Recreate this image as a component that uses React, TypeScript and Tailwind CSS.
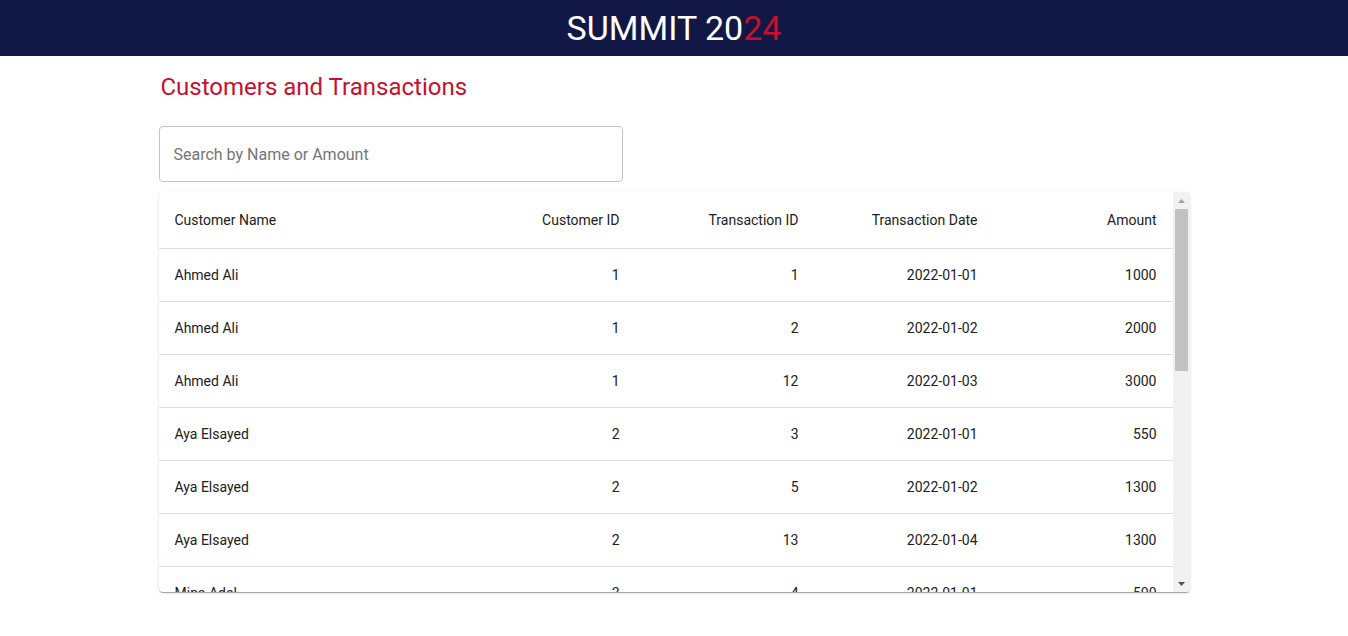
import { useEffect, useRef, useState } from 'react';

const rows = [
  { name: 'Ahmed Ali', cid: 1, tid: 1, date: '2022-01-01', amount: 1000 },
  { name: 'Ahmed Ali', cid: 1, tid: 2, date: '2022-01-02', amount: 2000 },
  { name: 'Ahmed Ali', cid: 1, tid: 12, date: '2022-01-03', amount: 3000 },
  { name: 'Aya Elsayed', cid: 2, tid: 3, date: '2022-01-01', amount: 550 },
  { name: 'Aya Elsayed', cid: 2, tid: 5, date: '2022-01-02', amount: 1300 },
  { name: 'Aya Elsayed', cid: 2, tid: 13, date: '2022-01-04', amount: 1300 },
  { name: 'Mina Adel', cid: 3, tid: 4, date: '2022-01-01', amount: 500 },
  { name: 'Mina Adel', cid: 3, tid: 6, date: '2022-01-02', amount: 750 },
  { name: 'Mina Adel', cid: 3, tid: 14, date: '2022-01-03', amount: 900 },
  { name: 'Sarah Reda', cid: 4, tid: 7, date: '2022-01-01', amount: 2500 },
  { name: 'Sarah Reda', cid: 4, tid: 8, date: '2022-01-02', amount: 875 },
  { name: 'Sarah Reda', cid: 4, tid: 15, date: '2022-01-03', amount: 1100 },
  { name: 'Mohamed Sayed', cid: 5, tid: 9, date: '2022-01-01', amount: 2500 },
  { name: 'Mohamed Sayed', cid: 5, tid: 10, date: '2022-01-02', amount: 875 },
  { name: 'Mohamed Sayed', cid: 5, tid: 11, date: '2022-01-03', amount: 1200 },
  { name: 'Mohamed Sayed', cid: 5, tid: 16, date: '2022-01-04', amount: 1500 },
];

const ARROW = 17;

export default function App() {
  const [search, setSearch] = useState('');
  const scrollRef = useRef<HTMLDivElement>(null);
  const [thumb, setThumb] = useState({ top: 0, height: 160 });

  const filtered = rows.filter(r =>
    !search.trim() ||
    r.name.toLowerCase().includes(search.toLowerCase()) ||
    String(r.amount).includes(search)
  );

  function updateThumb() {
    const el = scrollRef.current;
    if (!el) return;
    const track = el.clientHeight - ARROW * 2;
    const ratio = Math.min(1, el.clientHeight / el.scrollHeight);
    const height = Math.max(20, track * ratio);
    const max = el.scrollHeight - el.clientHeight;
    const top = max > 0 ? (el.scrollTop / max) * (track - height) : 0;
    setThumb({ top, height });
  }

  useEffect(() => {
    updateThumb();
  }, [filtered.length]);

  return (
    <div className="min-h-screen bg-white text-[#212121] font-['Roboto','Liberation_Sans',sans-serif]">
      <header className="h-[56px] bg-[#121846] flex items-center justify-center">
        <h1 className="text-[34px] leading-none text-white">
          SUMMIT 20<span className="text-[#c8102e]">24</span>
        </h1>
      </header>

      <main className="w-[1031px] mx-auto pt-[15px]">
        <h2 className="text-[24px] leading-[32px] text-[#c8102e] pl-[2px]">Customers and Transactions</h2>

        <input
          value={search}
          onChange={e => setSearch(e.target.value)}
          placeholder="Search by Name or Amount"
          className="mt-[23px] block w-[464px] h-[56px] border border-[#c4c4c4] rounded-[4px] px-[14px] text-[16px] text-[#212121] placeholder:text-[#757575] outline-none hover:border-[#212121]"
        />

        <div className="mt-[10px] h-[400px] flex rounded-[4px] bg-white overflow-hidden shadow-[0_2px_1px_-1px_rgba(0,0,0,0.2),0_1px_1px_0_rgba(0,0,0,0.14),0_1px_3px_0_rgba(0,0,0,0.12)]">
          <div
            ref={scrollRef}
            onScroll={updateThumb}
            className="flex-1 overflow-y-auto [scrollbar-width:none] [&::-webkit-scrollbar]:hidden"
          >
            <table className="w-full border-collapse text-[14px] leading-[20px]">
              <thead>
                <tr className="h-[56px] border-b border-[#e0e0e0]">
                  <th className="w-[298px] px-4 text-left font-normal">Customer Name</th>
                  <th className="w-[179px] px-4 text-right font-normal">Customer ID</th>
                  <th className="w-[179px] px-4 text-right font-normal">Transaction ID</th>
                  <th className="w-[179px] px-4 text-right font-normal">Transaction Date</th>
                  <th className="px-4 text-right font-normal">Amount</th>
                </tr>
              </thead>
              <tbody>
                {filtered.map(r => (
                  <tr key={r.tid} className="border-b border-[#e0e0e0]">
                    <td className="px-4 py-4 text-left">{r.name}</td>
                    <td className="px-4 py-4 text-right">{r.cid}</td>
                    <td className="px-4 py-4 text-right">{r.tid}</td>
                    <td className="px-4 py-4 text-right">{r.date}</td>
                    <td className="px-4 py-4 text-right">{r.amount}</td>
                  </tr>
                ))}
              </tbody>
            </table>
          </div>

          <div className="w-[17px] bg-[#f1f1f1] flex flex-col">
            <button
              onClick={() => scrollRef.current?.scrollBy({ top: -40 })}
              className="h-[17px] flex items-center justify-center"
            >
              <svg width="7" height="4" viewBox="0 0 7 4"><path d="M0 4 L3.5 0 L7 4 Z" fill="#a3a3a3" /></svg>
            </button>
            <div className="flex-1 px-[2px]">
              <div className="w-full bg-[#c1c1c1]" style={{ marginTop: thumb.top, height: thumb.height }} />
            </div>
            <button
              onClick={() => scrollRef.current?.scrollBy({ top: 40 })}
              className="h-[17px] flex items-center justify-center"
            >
              <svg width="7" height="4" viewBox="0 0 7 4"><path d="M0 0 L3.5 4 L7 0 Z" fill="#505050" /></svg>
            </button>
          </div>
        </div>
      </main>
    </div>
  );
}
